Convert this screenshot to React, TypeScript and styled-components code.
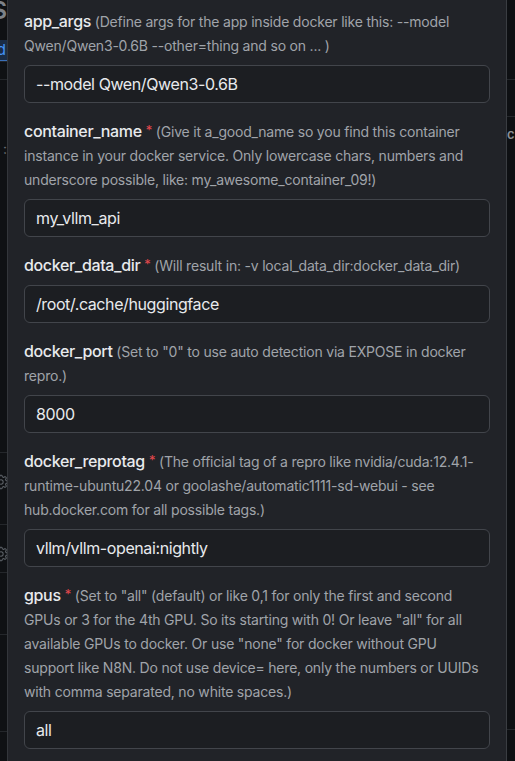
import React from "react";
import styled, { createGlobalStyle } from "styled-components";
import { GoGear } from "react-icons/go";

const GlobalStyle = createGlobalStyle`
    html, body {
        margin: 0;
        padding: 0;
        background: #0e1013;
        overflow: hidden;
    }
    * {
        box-sizing: border-box;
    }
`;

type Field = {
    name: string;
    required?: boolean;
    hint: string;
    value: string;
};

const fields: Field[] = [
    {
        name: "app_args",
        hint: "(Define args for the app inside docker like this: --model Qwen/Qwen3-0.6B --other=thing and so on ... )",
        value: "--model Qwen/Qwen3-0.6B",
    },
    {
        name: "container_name",
        required: true,
        hint: "(Give it a_good_name so you find this container instance in your docker service. Only lowercase chars, numbers and underscore possible, like: my_awesome_container_09!)",
        value: "my_vllm_api",
    },
    {
        name: "docker_data_dir",
        required: true,
        hint: "(Will result in: -v local_data_dir:docker_data_dir)",
        value: "/root/.cache/huggingface",
    },
    {
        name: "docker_port",
        hint: '(Set to "0" to use auto detection via EXPOSE in docker repro.)',
        value: "8000",
    },
    {
        name: "docker_reprotag",
        required: true,
        hint: "(The official tag of a repro like nvidia/cuda:12.4.1-runtime-ubuntu22.04 or goolashe/automatic1111-sd-webui - see hub.docker.com for all possible tags.)",
        value: "vllm/vllm-openai:nightly",
    },
    {
        name: "gpus",
        required: true,
        hint: '(Set to "all" (default) or like 0,1 for only the first and second GPUs or 3 for the 4th GPU. So its starting with 0! Or leave "all" for all available GPUs to docker. Or use "none" for docker without GPU support like N8N. Do not use device= here, only the numbers or UUIDs with comma separated, no white spaces.)',
        value: "all",
    },
];

export default function App() {
    return (
        <>
            <GlobalStyle />
            <Page>
                <LeftStrip>
                    <StripRow $h={38}>
                        <BigGlyph>S</BigGlyph>
                    </StripRow>
                    <StripRow $h={24} $line>
                        <LinkGlyph>d</LinkGlyph>
                    </StripRow>
                    <StripRow $h={18} $line />
                    <StripRow $h={100}>
                        <DimGlyph $top={98}>:</DimGlyph>
                    </StripRow>
                    <StripRow $h={273} $line />
                    <StripRow $h={72} $line>
                        <GearWrap><GoGear size={16} /></GearWrap>
                    </StripRow>
                    <StripRow $h={48} $line>
                        <GearWrap><GoGear size={16} /></GearWrap>
                    </StripRow>
                    <StripRow $h={62} $line />
                    <StripRow $h={97} $line />
                </LeftStrip>
                <Modal>
                    {fields.map((f) => (
                        <FieldBlock key={f.name}>
                            <Label>
                                <Name>{f.name}</Name>
                                {f.required && <Required>*</Required>}{" "}
                                <Hint>{f.hint}</Hint>
                            </Label>
                            <Input defaultValue={f.value} />
                        </FieldBlock>
                    ))}
                </Modal>
                <RightStrip>
                    <StripRow $h={80} $line />
                    <StripRow $h={37} $line />
                    <StripRow $h={613} $line>
                        <RightGlyph>c</RightGlyph>
                    </StripRow>
                </RightStrip>
            </Page>
        </>
    );
}

const Page = styled.div`
    display: flex;
    width: 515px;
    height: 761px;
    overflow: hidden;
    font-family: Inter, "Noto Sans", sans-serif;
`;

const LeftStrip = styled.div`
    width: 7px;
    flex-shrink: 0;
    display: flex;
    flex-direction: column;
    overflow: hidden;
    background: #0f1114;
`;

const RightStrip = styled.div`
    width: 8px;
    flex-shrink: 0;
    display: flex;
    flex-direction: column;
    overflow: hidden;
    background: #0e1013;
`;

const StripRow = styled.div<{ $h: number; $line?: boolean }>`
    position: relative;
    height: ${(p) => p.$h}px;
    flex-shrink: 0;
    border-bottom: ${(p) => (p.$line ? "1px solid #24272b" : "none")};
`;

const BigGlyph = styled.span`
    position: absolute;
    right: 0;
    top: -4px;
    font-size: 24px;
    font-weight: 600;
    color: #7d8288;
`;

const LinkGlyph = styled.span`
    position: absolute;
    right: 0;
    top: 2px;
    padding: 0 1px;
    line-height: 20px;
    font-size: 15px;
    color: #4493f8;
    background: #1b2d46;
    border-bottom: 1px solid #3a6fb8;
`;

const DimGlyph = styled.span<{ $top: number }>`
    position: absolute;
    right: 0;
    top: ${(p) => p.$top - 38}px;
    font-size: 14px;
    color: #6b7076;
`;

const GearWrap = styled.span`
    position: absolute;
    right: -2px;
    top: 21px;
    color: #5f646a;
    display: flex;
`;

const RightGlyph = styled.span`
    position: absolute;
    left: 0;
    top: 9px;
    font-size: 13px;
    font-weight: 600;
    color: #8b9096;
`;

const Modal = styled.div`
    width: 500px;
    flex-shrink: 0;
    background: #212328;
    border-left: 1px solid #33363b;
    border-right: 1px solid #3a3d42;
    padding: 10px 16px 0 16px;
    display: flex;
    flex-direction: column;
    gap: 17px;
`;

const FieldBlock = styled.div`
    display: flex;
    flex-direction: column;
    gap: 7px;
`;

const Label = styled.div`
    font-size: 14px;
    line-height: 24px;
    letter-spacing: -0.2px;
    color: #a0a4aa;
`;

const Name = styled.span`
    font-size: 16px;
    line-height: 1;
    font-weight: 500;
    letter-spacing: -0.35px;
    color: #e8eaed;
`;

const Required = styled.span`
    margin-left: 4px;
    font-size: 13px;
    line-height: 1;
    color: #e5484d;
    vertical-align: 2px;
`;

const Hint = styled.span`
    color: #a0a4aa;
`;

const Input = styled.input`
    height: 38px;
    width: 100%;
    padding: 0 11px;
    border: 1px solid #42454b;
    border-radius: 6px;
    background: #1c1e22;
    color: #e8eaed;
    font-family: Inter, "Noto Sans", sans-serif;
    font-size: 16px;
    letter-spacing: -0.4px;
    outline: none;
`;
